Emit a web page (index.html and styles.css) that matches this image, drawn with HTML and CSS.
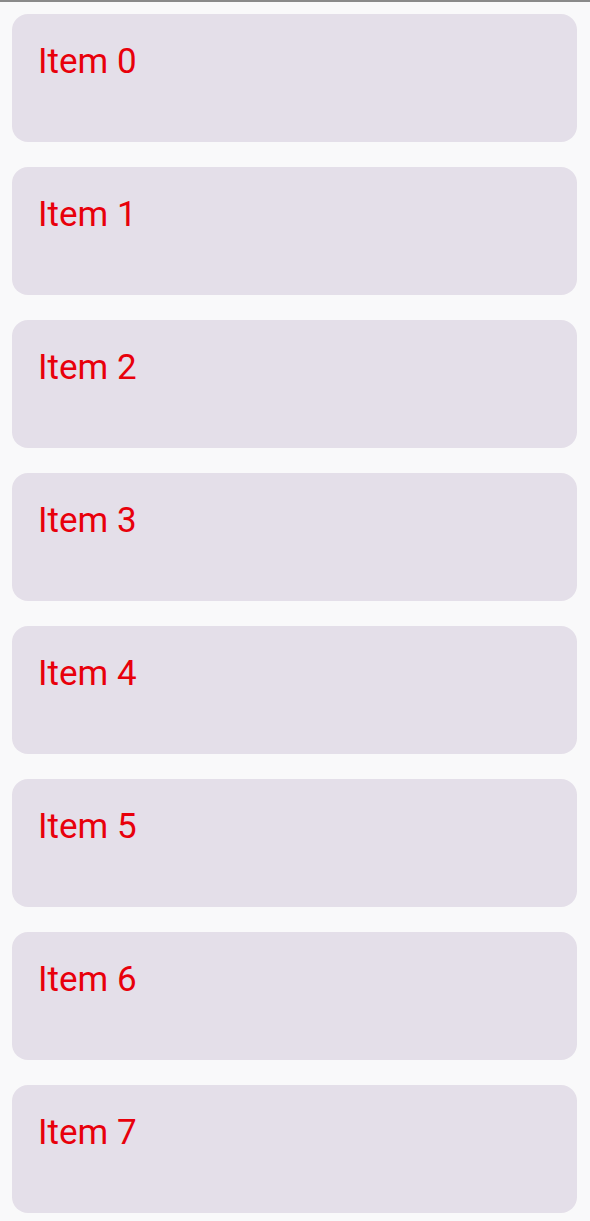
FILE: index.html
```html
<!DOCTYPE html>
<html>
<head>
    <title>Items</title>
    <link rel="stylesheet" href="styles.css">
</head>
<body>
    <div class="list">
        <div class="item">Item 0</div>
        <div class="item">Item 1</div>
        <div class="item">Item 2</div>
        <div class="item">Item 3</div>
        <div class="item">Item 4</div>
        <div class="item">Item 5</div>
        <div class="item">Item 6</div>
        <div class="item">Item 7</div>
    </div>
</body>
</html>
```

FILE: styles.css
```css
html, body {
    margin: 0;
    padding: 0;
    background: #f9f9fa;
}
body {
    border-top: 2px solid #8a8a8a;
    font-family: Roboto, "Noto Sans", sans-serif;
}
.list {
    display: flex;
    flex-direction: column;
    gap: 25px;
    padding: 12px 13px 0 12px;
}
.item {
    height: 128px;
    box-sizing: border-box;
    background: #e4dfe9;
    border-radius: 16px;
    color: #e8000b;
    font-size: 35px;
    line-height: 40px;
    padding: 28px 26px 0 26px;
}
```
